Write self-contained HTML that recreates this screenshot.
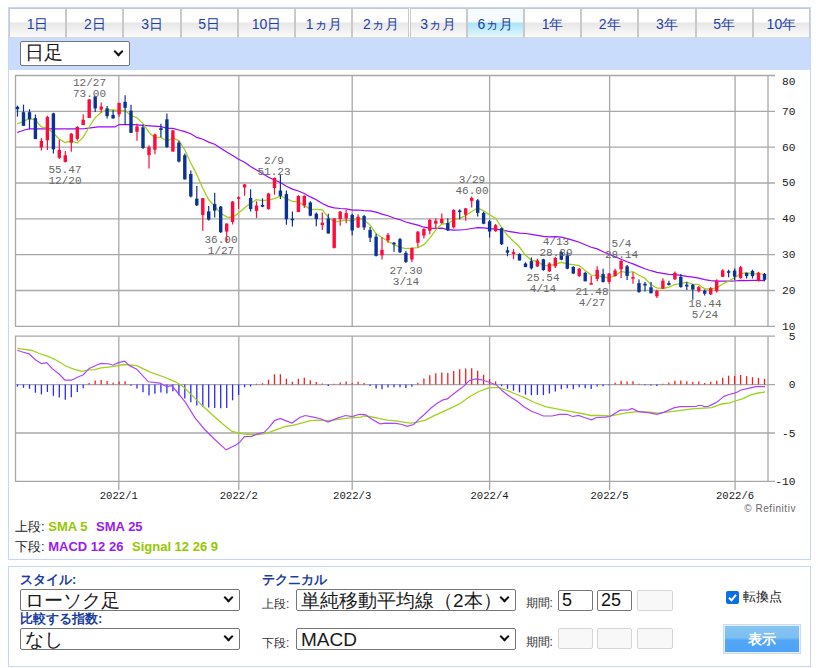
<!DOCTYPE html>
<html><head><meta charset="utf-8">
<style>
*{box-sizing:border-box;margin:0;padding:0}
html,body{width:818px;height:668px;background:#fff;overflow:hidden;font-family:"Liberation Sans",sans-serif}
.abs{position:absolute}
#p1{position:absolute;left:8px;top:7px;width:803px;height:553px;border:1px solid #c6d7f5}
#p2{position:absolute;left:8px;top:566px;width:803px;height:101px;border:1px solid #c6d7f5}
.tab{position:absolute;top:8px;height:30px;border:1px solid #c9c9c9;border-bottom-color:#dadada;
 background:linear-gradient(#ffffff 0px,#ffffff 13px,#e7e7e7 14px,#fbfbfb 28px);
 color:#1e3ea6;font-size:14px;line-height:30px;text-align:center}
.tab.act{background:linear-gradient(#f5fcff 0px,#f5fcff 13px,#a9e4f8 14px,#e4f7fd 28px)}
#bar{position:absolute;left:9px;top:38px;width:801px;height:32px;background:#c9dcfb}
.sel{position:absolute;background:#fff;border:1px solid #767676;border-radius:2px;color:#1a1a1a;font-size:19px;line-height:22px;padding-left:4px;white-space:nowrap;overflow:hidden}
.chev{position:absolute;width:7px;height:7px;border-right:2.2px solid #111;border-bottom:2.2px solid #111;transform:rotate(45deg)}
.lb{font-family:"Liberation Mono",monospace;font-size:11px;fill:#666;text-anchor:middle}
.ax{font-family:"Liberation Mono",monospace;font-size:11.2px;fill:#1a1a1a;text-anchor:end}
.dt{font-family:"Liberation Mono",monospace;font-size:10.6px;fill:#1a1a1a;text-anchor:middle}
.rf{font-family:"Liberation Sans",sans-serif;font-size:10px;fill:#6a6a6a;text-anchor:end;letter-spacing:0.55px}
.leg{position:absolute;left:15px;font-size:13px;color:#222;white-space:nowrap}
.g{color:#94c800;font-weight:bold} .pu{color:#9a1af0;font-weight:bold}
.hd{position:absolute;color:#1a3ea0;font-weight:bold;font-size:13px;white-space:nowrap}
.sm{position:absolute;font-size:12px;color:#333;white-space:nowrap;margin-top:1px}
.inp{position:absolute;width:35px;height:21px;border:1px solid #767676;border-radius:2px;background:#fff;font-size:18px;line-height:19px;padding-left:3px;color:#111}
.inp.dis{border-color:#d6d6d6;background:#f8f8f8}
</style></head><body>
<div id="p1"></div>
<div class="tab" style="left:9.00px;width:57.21px">1日</div>
<div class="tab" style="left:66.21px;width:57.21px">2日</div>
<div class="tab" style="left:123.43px;width:57.21px">3日</div>
<div class="tab" style="left:180.64px;width:57.21px">5日</div>
<div class="tab" style="left:237.86px;width:57.21px">10日</div>
<div class="tab" style="left:295.07px;width:57.21px">1ヵ月</div>
<div class="tab" style="left:352.29px;width:57.21px">2ヵ月</div>
<div class="tab" style="left:409.50px;width:57.21px">3ヵ月</div>
<div class="tab act" style="left:466.71px;width:57.21px">6ヵ月</div>
<div class="tab" style="left:523.93px;width:57.21px">1年</div>
<div class="tab" style="left:581.14px;width:57.21px">2年</div>
<div class="tab" style="left:638.36px;width:57.21px">3年</div>
<div class="tab" style="left:695.57px;width:57.21px">5年</div>
<div class="tab" style="left:752.79px;width:57.21px">10年</div>
<div id="bar"></div>
<div class="sel" style="left:20px;top:41px;width:110px;height:25px">日足</div>
<div class="chev" style="left:115px;top:48px"></div>
<svg class="abs" style="left:0;top:0" width="818" height="668" viewBox="0 0 818 668">
<line x1="15" y1="75.5" x2="775" y2="75.5" stroke="#a8a8a8" stroke-width="1.3"/>
<line x1="15" y1="111.3" x2="775" y2="111.3" stroke="#a8a8a8" stroke-width="1.3"/>
<line x1="15" y1="147.2" x2="775" y2="147.2" stroke="#a8a8a8" stroke-width="1.3"/>
<line x1="15" y1="183.0" x2="775" y2="183.0" stroke="#a8a8a8" stroke-width="1.3"/>
<line x1="15" y1="218.9" x2="775" y2="218.9" stroke="#a8a8a8" stroke-width="1.3"/>
<line x1="15" y1="254.7" x2="775" y2="254.7" stroke="#a8a8a8" stroke-width="1.3"/>
<line x1="15" y1="290.5" x2="775" y2="290.5" stroke="#a8a8a8" stroke-width="1.3"/>
<line x1="15" y1="326.4" x2="775" y2="326.4" stroke="#a8a8a8" stroke-width="1.3"/>
<line x1="15" y1="336.2" x2="775" y2="336.2" stroke="#a8a8a8" stroke-width="1.3"/>
<line x1="15" y1="384.6" x2="775" y2="384.6" stroke="#a8a8a8" stroke-width="1.3"/>
<line x1="15" y1="433.0" x2="775" y2="433.0" stroke="#a8a8a8" stroke-width="1.3"/>
<line x1="15" y1="481.4" x2="775" y2="481.4" stroke="#a8a8a8" stroke-width="1.3"/>
<line x1="118.8" y1="75.5" x2="118.8" y2="326.3" stroke="#a8a8a8" stroke-width="1.3"/>
<line x1="118.8" y1="336.2" x2="118.8" y2="490" stroke="#a8a8a8" stroke-width="1.3"/>
<line x1="238.8" y1="75.5" x2="238.8" y2="326.3" stroke="#a8a8a8" stroke-width="1.3"/>
<line x1="238.8" y1="336.2" x2="238.8" y2="490" stroke="#a8a8a8" stroke-width="1.3"/>
<line x1="352.2" y1="75.5" x2="352.2" y2="326.3" stroke="#a8a8a8" stroke-width="1.3"/>
<line x1="352.2" y1="336.2" x2="352.2" y2="490" stroke="#a8a8a8" stroke-width="1.3"/>
<line x1="489.6" y1="75.5" x2="489.6" y2="326.3" stroke="#a8a8a8" stroke-width="1.3"/>
<line x1="489.6" y1="336.2" x2="489.6" y2="490" stroke="#a8a8a8" stroke-width="1.3"/>
<line x1="609.6" y1="75.5" x2="609.6" y2="326.3" stroke="#a8a8a8" stroke-width="1.3"/>
<line x1="609.6" y1="336.2" x2="609.6" y2="490" stroke="#a8a8a8" stroke-width="1.3"/>
<line x1="735.1" y1="75.5" x2="735.1" y2="326.3" stroke="#a8a8a8" stroke-width="1.3"/>
<line x1="735.1" y1="336.2" x2="735.1" y2="490" stroke="#a8a8a8" stroke-width="1.3"/>
<line x1="768.0" y1="75.5" x2="768.0" y2="326.3" stroke="#a8a8a8" stroke-width="1.3"/>
<line x1="768.0" y1="336.2" x2="768.0" y2="481.4" stroke="#a8a8a8" stroke-width="1.3"/>
<line x1="15.5" y1="75.5" x2="15.5" y2="326.3" stroke="#a8a8a8" stroke-width="1.3"/>
<line x1="15.5" y1="336.2" x2="15.5" y2="481.4" stroke="#a8a8a8" stroke-width="1.3"/>
<line x1="17.5" y1="384.5" x2="17.5" y2="386.5" stroke="#2a2aff" stroke-width="1.3"/>
<line x1="23.5" y1="384.5" x2="23.5" y2="387.8" stroke="#2a2aff" stroke-width="1.3"/>
<line x1="29.5" y1="384.5" x2="29.5" y2="388.8" stroke="#2a2aff" stroke-width="1.3"/>
<line x1="35.4" y1="384.5" x2="35.4" y2="392.7" stroke="#2a2aff" stroke-width="1.3"/>
<line x1="41.4" y1="384.5" x2="41.4" y2="394.4" stroke="#2a2aff" stroke-width="1.3"/>
<line x1="47.4" y1="384.5" x2="47.4" y2="392.0" stroke="#2a2aff" stroke-width="1.3"/>
<line x1="53.4" y1="384.5" x2="53.4" y2="395.8" stroke="#2a2aff" stroke-width="1.3"/>
<line x1="59.3" y1="384.5" x2="59.3" y2="397.4" stroke="#2a2aff" stroke-width="1.3"/>
<line x1="65.3" y1="384.5" x2="65.3" y2="399.7" stroke="#2a2aff" stroke-width="1.3"/>
<line x1="71.3" y1="384.5" x2="71.3" y2="397.2" stroke="#2a2aff" stroke-width="1.3"/>
<line x1="77.3" y1="384.5" x2="77.3" y2="392.1" stroke="#2a2aff" stroke-width="1.3"/>
<line x1="83.2" y1="384.5" x2="83.2" y2="388.3" stroke="#2a2aff" stroke-width="1.3"/>
<line x1="89.2" y1="384.5" x2="89.2" y2="382.9" stroke="#ff1a1a" stroke-width="1.3"/>
<line x1="95.2" y1="384.5" x2="95.2" y2="380.5" stroke="#ff1a1a" stroke-width="1.3"/>
<line x1="101.2" y1="384.5" x2="101.2" y2="379.9" stroke="#ff1a1a" stroke-width="1.3"/>
<line x1="107.1" y1="384.5" x2="107.1" y2="380.9" stroke="#ff1a1a" stroke-width="1.3"/>
<line x1="113.1" y1="384.5" x2="113.1" y2="382.8" stroke="#ff1a1a" stroke-width="1.3"/>
<line x1="119.1" y1="384.5" x2="119.1" y2="381.5" stroke="#ff1a1a" stroke-width="1.3"/>
<line x1="125.1" y1="384.5" x2="125.1" y2="381.3" stroke="#ff1a1a" stroke-width="1.3"/>
<line x1="131.0" y1="384.5" x2="131.0" y2="385.8" stroke="#2a2aff" stroke-width="1.3"/>
<line x1="137.0" y1="384.5" x2="137.0" y2="388.4" stroke="#2a2aff" stroke-width="1.3"/>
<line x1="143.0" y1="384.5" x2="143.0" y2="392.2" stroke="#2a2aff" stroke-width="1.3"/>
<line x1="149.0" y1="384.5" x2="149.0" y2="395.4" stroke="#2a2aff" stroke-width="1.3"/>
<line x1="154.9" y1="384.5" x2="154.9" y2="393.8" stroke="#2a2aff" stroke-width="1.3"/>
<line x1="160.9" y1="384.5" x2="160.9" y2="392.6" stroke="#2a2aff" stroke-width="1.3"/>
<line x1="166.9" y1="384.5" x2="166.9" y2="393.4" stroke="#2a2aff" stroke-width="1.3"/>
<line x1="172.9" y1="384.5" x2="172.9" y2="391.2" stroke="#2a2aff" stroke-width="1.3"/>
<line x1="178.9" y1="384.5" x2="178.9" y2="395.3" stroke="#2a2aff" stroke-width="1.3"/>
<line x1="184.8" y1="384.5" x2="184.8" y2="398.6" stroke="#2a2aff" stroke-width="1.3"/>
<line x1="190.8" y1="384.5" x2="190.8" y2="402.3" stroke="#2a2aff" stroke-width="1.3"/>
<line x1="196.8" y1="384.5" x2="196.8" y2="405.4" stroke="#2a2aff" stroke-width="1.3"/>
<line x1="202.8" y1="384.5" x2="202.8" y2="406.7" stroke="#2a2aff" stroke-width="1.3"/>
<line x1="208.7" y1="384.5" x2="208.7" y2="407.6" stroke="#2a2aff" stroke-width="1.3"/>
<line x1="214.7" y1="384.5" x2="214.7" y2="408.1" stroke="#2a2aff" stroke-width="1.3"/>
<line x1="220.7" y1="384.5" x2="220.7" y2="408.3" stroke="#2a2aff" stroke-width="1.3"/>
<line x1="226.7" y1="384.5" x2="226.7" y2="408.1" stroke="#2a2aff" stroke-width="1.3"/>
<line x1="232.6" y1="384.5" x2="232.6" y2="400.3" stroke="#2a2aff" stroke-width="1.3"/>
<line x1="238.6" y1="384.5" x2="238.6" y2="395.0" stroke="#2a2aff" stroke-width="1.3"/>
<line x1="244.6" y1="384.5" x2="244.6" y2="387.3" stroke="#2a2aff" stroke-width="1.3"/>
<line x1="250.6" y1="384.5" x2="250.6" y2="386.5" stroke="#2a2aff" stroke-width="1.3"/>
<line x1="256.5" y1="384.5" x2="256.5" y2="383.7" stroke="#ff1a1a" stroke-width="1.3"/>
<line x1="262.5" y1="384.5" x2="262.5" y2="383.2" stroke="#ff1a1a" stroke-width="1.3"/>
<line x1="268.5" y1="384.5" x2="268.5" y2="379.7" stroke="#ff1a1a" stroke-width="1.3"/>
<line x1="274.5" y1="384.5" x2="274.5" y2="374.3" stroke="#ff1a1a" stroke-width="1.3"/>
<line x1="280.4" y1="384.5" x2="280.4" y2="374.2" stroke="#ff1a1a" stroke-width="1.3"/>
<line x1="286.4" y1="384.5" x2="286.4" y2="378.8" stroke="#ff1a1a" stroke-width="1.3"/>
<line x1="292.4" y1="384.5" x2="292.4" y2="381.8" stroke="#ff1a1a" stroke-width="1.3"/>
<line x1="298.4" y1="384.5" x2="298.4" y2="378.8" stroke="#ff1a1a" stroke-width="1.3"/>
<line x1="304.3" y1="384.5" x2="304.3" y2="377.7" stroke="#ff1a1a" stroke-width="1.3"/>
<line x1="310.3" y1="384.5" x2="310.3" y2="380.2" stroke="#ff1a1a" stroke-width="1.3"/>
<line x1="316.3" y1="384.5" x2="316.3" y2="381.9" stroke="#ff1a1a" stroke-width="1.3"/>
<line x1="322.3" y1="384.5" x2="322.3" y2="383.5" stroke="#ff1a1a" stroke-width="1.3"/>
<line x1="328.3" y1="384.5" x2="328.3" y2="386.0" stroke="#2a2aff" stroke-width="1.3"/>
<line x1="334.2" y1="384.5" x2="334.2" y2="383.7" stroke="#ff1a1a" stroke-width="1.3"/>
<line x1="340.2" y1="384.5" x2="340.2" y2="382.5" stroke="#ff1a1a" stroke-width="1.3"/>
<line x1="346.2" y1="384.5" x2="346.2" y2="381.6" stroke="#ff1a1a" stroke-width="1.3"/>
<line x1="352.2" y1="384.5" x2="352.2" y2="383.1" stroke="#ff1a1a" stroke-width="1.3"/>
<line x1="358.1" y1="384.5" x2="358.1" y2="381.7" stroke="#ff1a1a" stroke-width="1.3"/>
<line x1="364.1" y1="384.5" x2="364.1" y2="382.9" stroke="#ff1a1a" stroke-width="1.3"/>
<line x1="370.1" y1="384.5" x2="370.1" y2="386.0" stroke="#2a2aff" stroke-width="1.3"/>
<line x1="376.1" y1="384.5" x2="376.1" y2="388.4" stroke="#2a2aff" stroke-width="1.3"/>
<line x1="382.0" y1="384.5" x2="382.0" y2="389.2" stroke="#2a2aff" stroke-width="1.3"/>
<line x1="388.0" y1="384.5" x2="388.0" y2="387.6" stroke="#2a2aff" stroke-width="1.3"/>
<line x1="394.0" y1="384.5" x2="394.0" y2="387.3" stroke="#2a2aff" stroke-width="1.3"/>
<line x1="400.0" y1="384.5" x2="400.0" y2="387.2" stroke="#2a2aff" stroke-width="1.3"/>
<line x1="405.9" y1="384.5" x2="405.9" y2="388.1" stroke="#2a2aff" stroke-width="1.3"/>
<line x1="411.9" y1="384.5" x2="411.9" y2="386.7" stroke="#2a2aff" stroke-width="1.3"/>
<line x1="417.9" y1="384.5" x2="417.9" y2="382.7" stroke="#ff1a1a" stroke-width="1.3"/>
<line x1="423.9" y1="384.5" x2="423.9" y2="378.6" stroke="#ff1a1a" stroke-width="1.3"/>
<line x1="429.8" y1="384.5" x2="429.8" y2="375.3" stroke="#ff1a1a" stroke-width="1.3"/>
<line x1="435.8" y1="384.5" x2="435.8" y2="373.3" stroke="#ff1a1a" stroke-width="1.3"/>
<line x1="441.8" y1="384.5" x2="441.8" y2="372.4" stroke="#ff1a1a" stroke-width="1.3"/>
<line x1="447.8" y1="384.5" x2="447.8" y2="373.1" stroke="#ff1a1a" stroke-width="1.3"/>
<line x1="453.7" y1="384.5" x2="453.7" y2="370.9" stroke="#ff1a1a" stroke-width="1.3"/>
<line x1="459.7" y1="384.5" x2="459.7" y2="369.3" stroke="#ff1a1a" stroke-width="1.3"/>
<line x1="465.7" y1="384.5" x2="465.7" y2="368.5" stroke="#ff1a1a" stroke-width="1.3"/>
<line x1="471.7" y1="384.5" x2="471.7" y2="368.2" stroke="#ff1a1a" stroke-width="1.3"/>
<line x1="477.7" y1="384.5" x2="477.7" y2="370.8" stroke="#ff1a1a" stroke-width="1.3"/>
<line x1="483.6" y1="384.5" x2="483.6" y2="374.8" stroke="#ff1a1a" stroke-width="1.3"/>
<line x1="489.6" y1="384.5" x2="489.6" y2="379.1" stroke="#ff1a1a" stroke-width="1.3"/>
<line x1="495.6" y1="384.5" x2="495.6" y2="381.4" stroke="#ff1a1a" stroke-width="1.3"/>
<line x1="501.6" y1="384.5" x2="501.6" y2="386.2" stroke="#2a2aff" stroke-width="1.3"/>
<line x1="507.5" y1="384.5" x2="507.5" y2="388.9" stroke="#2a2aff" stroke-width="1.3"/>
<line x1="513.5" y1="384.5" x2="513.5" y2="390.6" stroke="#2a2aff" stroke-width="1.3"/>
<line x1="519.5" y1="384.5" x2="519.5" y2="392.4" stroke="#2a2aff" stroke-width="1.3"/>
<line x1="525.5" y1="384.5" x2="525.5" y2="394.6" stroke="#2a2aff" stroke-width="1.3"/>
<line x1="531.4" y1="384.5" x2="531.4" y2="395.2" stroke="#2a2aff" stroke-width="1.3"/>
<line x1="537.4" y1="384.5" x2="537.4" y2="394.9" stroke="#2a2aff" stroke-width="1.3"/>
<line x1="543.4" y1="384.5" x2="543.4" y2="395.2" stroke="#2a2aff" stroke-width="1.3"/>
<line x1="549.4" y1="384.5" x2="549.4" y2="393.5" stroke="#2a2aff" stroke-width="1.3"/>
<line x1="555.3" y1="384.5" x2="555.3" y2="391.5" stroke="#2a2aff" stroke-width="1.3"/>
<line x1="561.3" y1="384.5" x2="561.3" y2="389.3" stroke="#2a2aff" stroke-width="1.3"/>
<line x1="567.3" y1="384.5" x2="567.3" y2="388.3" stroke="#2a2aff" stroke-width="1.3"/>
<line x1="573.3" y1="384.5" x2="573.3" y2="389.2" stroke="#2a2aff" stroke-width="1.3"/>
<line x1="579.2" y1="384.5" x2="579.2" y2="387.2" stroke="#2a2aff" stroke-width="1.3"/>
<line x1="585.2" y1="384.5" x2="585.2" y2="388.2" stroke="#2a2aff" stroke-width="1.3"/>
<line x1="591.2" y1="384.5" x2="591.2" y2="389.0" stroke="#2a2aff" stroke-width="1.3"/>
<line x1="597.2" y1="384.5" x2="597.2" y2="386.6" stroke="#2a2aff" stroke-width="1.3"/>
<line x1="603.1" y1="384.5" x2="603.1" y2="386.2" stroke="#2a2aff" stroke-width="1.3"/>
<line x1="609.1" y1="384.5" x2="609.1" y2="385.2" stroke="#2a2aff" stroke-width="1.3"/>
<line x1="615.1" y1="384.5" x2="615.1" y2="382.7" stroke="#ff1a1a" stroke-width="1.3"/>
<line x1="621.1" y1="384.5" x2="621.1" y2="380.7" stroke="#ff1a1a" stroke-width="1.3"/>
<line x1="627.1" y1="384.5" x2="627.1" y2="381.6" stroke="#ff1a1a" stroke-width="1.3"/>
<line x1="633.0" y1="384.5" x2="633.0" y2="381.2" stroke="#ff1a1a" stroke-width="1.3"/>
<line x1="639.0" y1="384.5" x2="639.0" y2="383.7" stroke="#ff1a1a" stroke-width="1.3"/>
<line x1="645.0" y1="384.5" x2="645.0" y2="385.3" stroke="#2a2aff" stroke-width="1.3"/>
<line x1="651.0" y1="384.5" x2="651.0" y2="385.4" stroke="#2a2aff" stroke-width="1.3"/>
<line x1="656.9" y1="384.5" x2="656.9" y2="385.9" stroke="#2a2aff" stroke-width="1.3"/>
<line x1="662.9" y1="384.5" x2="662.9" y2="383.7" stroke="#ff1a1a" stroke-width="1.3"/>
<line x1="668.9" y1="384.5" x2="668.9" y2="382.6" stroke="#ff1a1a" stroke-width="1.3"/>
<line x1="674.9" y1="384.5" x2="674.9" y2="380.8" stroke="#ff1a1a" stroke-width="1.3"/>
<line x1="680.8" y1="384.5" x2="680.8" y2="380.6" stroke="#ff1a1a" stroke-width="1.3"/>
<line x1="686.8" y1="384.5" x2="686.8" y2="381.3" stroke="#ff1a1a" stroke-width="1.3"/>
<line x1="692.8" y1="384.5" x2="692.8" y2="382.0" stroke="#ff1a1a" stroke-width="1.3"/>
<line x1="698.8" y1="384.5" x2="698.8" y2="381.4" stroke="#ff1a1a" stroke-width="1.3"/>
<line x1="704.7" y1="384.5" x2="704.7" y2="383.0" stroke="#ff1a1a" stroke-width="1.3"/>
<line x1="710.7" y1="384.5" x2="710.7" y2="381.8" stroke="#ff1a1a" stroke-width="1.3"/>
<line x1="716.7" y1="384.5" x2="716.7" y2="380.7" stroke="#ff1a1a" stroke-width="1.3"/>
<line x1="722.7" y1="384.5" x2="722.7" y2="377.8" stroke="#ff1a1a" stroke-width="1.3"/>
<line x1="728.6" y1="384.5" x2="728.6" y2="375.7" stroke="#ff1a1a" stroke-width="1.3"/>
<line x1="734.6" y1="384.5" x2="734.6" y2="376.0" stroke="#ff1a1a" stroke-width="1.3"/>
<line x1="740.6" y1="384.5" x2="740.6" y2="374.9" stroke="#ff1a1a" stroke-width="1.3"/>
<line x1="746.6" y1="384.5" x2="746.6" y2="376.1" stroke="#ff1a1a" stroke-width="1.3"/>
<line x1="752.5" y1="384.5" x2="752.5" y2="377.2" stroke="#ff1a1a" stroke-width="1.3"/>
<line x1="758.5" y1="384.5" x2="758.5" y2="377.9" stroke="#ff1a1a" stroke-width="1.3"/>
<line x1="764.5" y1="384.5" x2="764.5" y2="378.9" stroke="#ff1a1a" stroke-width="1.3"/>
<polyline points="17.1,132.5 26.0,129.5 30.0,128.9 74.0,128.9 85.0,128.7 98.0,126.9 115.0,126.9 119.0,124.5 134.0,124.6 150.0,125.8 160.9,126.6 166.9,128.1 172.9,128.3 178.9,130.0 184.8,131.6 190.8,133.8 196.8,137.4 202.8,139.3 208.7,142.1 214.7,144.3 220.7,148.2 226.7,152.1 232.6,155.4 238.6,159.3 244.6,162.3 250.6,166.4 256.5,170.0 262.5,173.5 268.5,177.2 274.5,180.0 280.4,182.5 286.4,186.2 292.4,189.1 298.4,191.0 304.3,193.5 310.3,196.9 316.3,199.8 322.3,203.5 328.3,206.4 334.2,207.9 340.2,208.5 346.2,208.8 352.2,210.1 358.1,210.0 364.1,210.7 370.1,210.9 376.1,212.2 382.0,214.1 388.0,215.7 394.0,218.0 400.0,219.8 405.9,222.0 411.9,223.7 417.9,225.2 423.9,227.2 429.8,228.2 435.8,228.3 441.8,228.2 447.8,229.6 453.7,230.2 459.7,230.0 465.7,229.5 471.7,228.5 477.7,227.7 483.6,227.9 489.6,228.7 495.6,229.2 501.6,229.8 507.5,231.2 513.5,232.2 519.5,233.1 525.5,233.5 531.4,234.3 537.4,235.3 543.4,236.4 549.4,236.8 555.3,236.6 561.3,237.1 567.3,238.6 573.3,240.4 579.2,242.3 585.2,244.7 591.2,247.3 597.2,248.9 603.1,251.8 609.1,254.3 615.1,256.8 621.1,259.3 627.1,261.8 633.0,263.9 639.0,266.4 645.0,268.8 651.0,270.7 656.9,272.3 662.9,273.4 668.9,274.4 674.9,274.6 680.8,275.4 686.8,276.4 692.8,277.2 698.8,278.1 704.7,279.6 710.7,280.7 716.7,281.2 722.7,281.0 728.6,281.2 734.6,281.0 740.6,280.4 746.6,280.6 752.5,280.4 758.5,280.4 764.5,280.7" fill="none" stroke="#9a08ff" stroke-width="1.2"/>
<polyline points="17.1,124.0 23.1,121.7 29.1,118.7 35.0,119.7 41.4,126.9 47.4,128.4 53.4,133.1 59.3,139.2 65.3,142.5 71.3,141.0 77.3,143.0 83.2,137.1 89.2,127.0 95.2,117.6 101.2,112.2 107.1,110.0 113.1,109.8 119.1,110.5 125.1,110.4 131.0,115.7 137.0,117.7 143.0,123.6 149.0,132.4 154.9,137.8 160.9,137.2 166.9,141.3 172.9,137.8 178.9,140.7 184.8,149.7 190.8,163.0 196.8,174.6 202.8,188.2 208.7,199.8 214.7,206.1 220.7,213.2 226.7,216.8 232.6,217.5 238.6,213.0 244.6,207.8 250.6,203.2 256.5,199.6 262.5,200.6 268.5,199.8 274.5,198.6 280.4,195.9 286.4,198.7 292.4,201.3 298.4,201.8 304.3,205.4 310.3,209.3 316.3,209.3 322.3,209.9 328.3,217.4 334.2,221.9 340.2,221.1 346.2,219.9 352.2,221.4 358.1,218.1 364.1,219.9 370.1,225.1 376.1,233.7 382.0,237.5 388.0,241.2 394.0,244.5 400.0,247.4 405.9,248.6 411.9,248.2 417.9,247.6 423.9,244.6 429.8,238.1 435.8,229.9 441.8,224.0 447.8,223.7 453.7,219.9 459.7,218.2 465.7,215.7 471.7,211.5 477.7,208.0 483.6,210.8 489.6,214.9 495.6,218.2 501.6,227.5 507.5,235.5 513.5,241.2 519.5,247.0 525.5,255.3 531.4,260.1 537.4,261.7 543.4,265.3 549.4,265.9 555.3,264.1 561.3,262.3 567.3,264.0 573.3,264.7 579.2,265.7 585.2,270.4 591.2,275.1 597.2,275.3 603.1,277.0 609.1,277.9 615.1,275.8 621.1,271.4 627.1,272.6 633.0,271.6 639.0,275.3 645.0,278.3 651.0,284.8 656.9,287.8 662.9,288.5 668.9,287.1 674.9,284.5 680.8,283.3 686.8,282.4 692.8,284.2 698.8,284.6 704.7,288.8 710.7,289.0 716.7,287.8 722.7,284.0 728.6,281.1 734.6,277.7 740.6,273.5 746.6,272.6 752.5,273.8 758.5,273.8 764.5,274.4" fill="none" stroke="#9fd21a" stroke-width="1.3"/>
<polyline points="17.3,348.3 24.7,349.4 32.0,350.5 39.3,353.5 48.1,356.4 57.0,360.5 65.7,366.0 74.5,369.3 81.9,371.4 89.2,369.9 95.0,369.6 101.0,367.8 112.7,366.7 123.0,364.5 136.7,365.7 150.3,372.1 163.9,377.0 175.6,381.8 183.3,386.7 193.1,396.4 202.8,406.1 212.5,414.9 222.2,423.6 232.0,431.4 241.7,433.7 248.8,434.5 257.6,434.5 266.4,433.4 275.2,430.1 285.5,426.5 292.8,425.4 301.6,423.1 310.4,420.6 319.2,420.2 328.0,420.6 336.8,419.6 345.6,418.4 360.9,417.2 363.8,416.0 369.7,416.5 378.5,418.4 387.3,420.1 396.1,420.9 404.9,422.3 410.7,423.1 416.6,422.3 425.4,420.1 434.2,415.7 443.0,411.6 451.8,407.7 460.6,403.3 469.4,396.7 478.8,391.5 489.1,387.6 499.3,387.6 508.1,390.8 516.9,394.5 525.7,398.1 534.5,402.5 546.3,406.9 558.0,409.1 569.7,411.3 581.5,413.5 590.9,415.5 599.7,415.5 609.9,416.0 617.3,414.6 626.1,412.8 637.8,411.6 649.5,412.1 658.3,413.1 667.1,412.1 678.9,410.6 692.2,408.9 711.8,407.7 721.6,404.0 730.1,402.8 735.0,401.0 742.3,398.9 750.9,394.8 758.2,393.0 765.0,392.0" fill="none" stroke="#9fd21a" stroke-width="1.3"/>
<polyline points="17.3,350.2 23.2,352.3 29.0,353.8 35.7,360.0 41.5,363.7 46.7,362.6 52.5,368.9 59.1,374.0 65.0,380.2 71.6,380.2 77.5,377.2 83.3,374.7 89.2,368.4 98.0,364.5 101.0,363.4 109.7,364.0 112.7,365.2 118.6,362.6 124.4,361.1 130.0,365.9 136.7,369.2 148.3,381.8 160.0,383.2 166.8,386.7 171.7,385.7 177.5,392.5 185.3,402.2 195.0,417.8 204.7,429.5 214.5,439.2 226.1,449.9 235.9,445.0 240.0,441.9 244.4,436.7 251.7,436.3 257.6,433.8 264.2,432.3 269.3,427.2 274.5,420.6 280.3,418.4 285.5,420.6 292.1,423.1 300.1,417.2 305.3,415.5 313.3,417.2 320.7,418.7 328.0,422.1 336.8,418.4 345.6,415.5 352.2,416.6 359.4,414.3 365.3,414.6 371.1,418.7 380.0,423.8 385.8,423.1 396.1,423.4 401.9,424.5 407.1,426.3 413.7,424.5 419.5,418.7 425.4,413.5 431.3,407.7 437.1,403.3 443.0,399.9 447.4,398.9 451.8,395.2 457.7,390.8 463.6,386.4 469.4,380.5 475.9,378.8 481.7,379.8 489.1,382.3 496.4,384.9 502.3,390.8 509.6,396.4 516.9,401.1 524.3,406.9 531.6,411.3 537.5,413.5 543.3,416.0 552.1,416.0 559.5,414.3 566.8,414.3 572.7,416.5 578.6,415.4 584.4,417.5 591.6,419.9 596.7,417.5 605.5,417.2 609.9,416.5 620.2,410.2 629.0,409.9 632.0,408.4 637.8,411.3 649.5,412.8 656.9,414.3 664.2,412.1 674.5,407.7 680.4,406.6 695.9,406.5 698.3,405.5 702.0,405.5 704.4,406.7 708.1,406.5 711.8,404.6 716.7,402.2 720.3,399.4 724.0,396.4 728.9,394.5 733.8,393.3 737.5,392.0 741.1,390.0 748.5,388.4 755.8,386.7 765.0,386.7" fill="none" stroke="#ac45ff" stroke-width="1.2"/>
<line x1="17.5" y1="105.6" x2="17.5" y2="116.6" stroke="#0a3296" stroke-width="1.2"/>
<rect x="15.8" y="106.8" width="3.4" height="2.4" fill="#0a3296"/>
<line x1="23.5" y1="104.6" x2="23.5" y2="126.0" stroke="#0a3296" stroke-width="1.2"/>
<rect x="21.8" y="112.2" width="3.4" height="13.7" fill="#0a3296"/>
<line x1="29.5" y1="109.2" x2="29.5" y2="128.9" stroke="#0a3296" stroke-width="1.2"/>
<rect x="27.8" y="112.2" width="3.4" height="7.1" fill="#0a3296"/>
<line x1="35.4" y1="114.6" x2="35.4" y2="139.1" stroke="#0a3296" stroke-width="1.2"/>
<rect x="33.7" y="118.1" width="3.4" height="21.0" fill="#0a3296"/>
<line x1="41.4" y1="137.9" x2="41.4" y2="150.5" stroke="#ff0a3a" stroke-width="1.2"/>
<rect x="39.7" y="140.9" width="3.4" height="6.6" fill="#ff0a3a"/>
<line x1="47.4" y1="115.7" x2="47.4" y2="149.9" stroke="#ff0a3a" stroke-width="1.2"/>
<rect x="45.7" y="117.0" width="3.4" height="23.3" fill="#ff0a3a"/>
<line x1="53.4" y1="112.8" x2="53.4" y2="153.5" stroke="#0a3296" stroke-width="1.2"/>
<rect x="51.7" y="113.4" width="3.4" height="35.9" fill="#0a3296"/>
<line x1="59.3" y1="139.7" x2="59.3" y2="158.9" stroke="#ff0a3a" stroke-width="1.2"/>
<rect x="57.6" y="149.9" width="3.4" height="7.8" fill="#ff0a3a"/>
<line x1="65.3" y1="151.0" x2="65.3" y2="162.5" stroke="#ff0a3a" stroke-width="1.2"/>
<rect x="63.6" y="155.3" width="3.4" height="6.6" fill="#ff0a3a"/>
<line x1="71.3" y1="133.1" x2="71.3" y2="151.7" stroke="#ff0a3a" stroke-width="1.2"/>
<rect x="69.6" y="133.7" width="3.4" height="9.0" fill="#ff0a3a"/>
<line x1="77.3" y1="126.3" x2="77.3" y2="140.7" stroke="#ff0a3a" stroke-width="1.2"/>
<rect x="75.6" y="126.9" width="3.4" height="12.0" fill="#ff0a3a"/>
<line x1="83.2" y1="114.3" x2="83.2" y2="125.1" stroke="#ff0a3a" stroke-width="1.2"/>
<rect x="81.5" y="119.7" width="3.4" height="5.4" fill="#ff0a3a"/>
<line x1="89.2" y1="99.1" x2="89.2" y2="117.9" stroke="#ff0a3a" stroke-width="1.2"/>
<rect x="87.5" y="99.4" width="3.4" height="18.5" fill="#ff0a3a"/>
<line x1="95.2" y1="95.8" x2="95.2" y2="112.0" stroke="#0a3296" stroke-width="1.2"/>
<rect x="93.5" y="96.4" width="3.4" height="12.0" fill="#0a3296"/>
<line x1="101.2" y1="102.4" x2="101.2" y2="112.5" stroke="#ff0a3a" stroke-width="1.2"/>
<rect x="99.5" y="106.6" width="3.4" height="3.0" fill="#ff0a3a"/>
<line x1="107.1" y1="106.0" x2="107.1" y2="118.5" stroke="#0a3296" stroke-width="1.2"/>
<rect x="105.4" y="108.4" width="3.4" height="7.7" fill="#0a3296"/>
<line x1="113.1" y1="110.1" x2="113.1" y2="118.5" stroke="#0a3296" stroke-width="1.2"/>
<rect x="111.4" y="114.9" width="3.4" height="3.6" fill="#0a3296"/>
<line x1="119.1" y1="102.4" x2="119.1" y2="116.7" stroke="#ff0a3a" stroke-width="1.2"/>
<rect x="117.4" y="103.0" width="3.4" height="11.3" fill="#ff0a3a"/>
<line x1="125.1" y1="95.2" x2="125.1" y2="125.1" stroke="#0a3296" stroke-width="1.2"/>
<rect x="123.4" y="101.8" width="3.4" height="6.0" fill="#0a3296"/>
<line x1="131.0" y1="104.8" x2="131.0" y2="132.9" stroke="#0a3296" stroke-width="1.2"/>
<rect x="129.3" y="110.7" width="3.4" height="22.2" fill="#0a3296"/>
<line x1="137.0" y1="123.7" x2="137.0" y2="140.8" stroke="#ff0a3a" stroke-width="1.2"/>
<rect x="135.3" y="126.4" width="3.4" height="5.4" fill="#ff0a3a"/>
<line x1="143.0" y1="124.6" x2="143.0" y2="148.9" stroke="#0a3296" stroke-width="1.2"/>
<rect x="141.3" y="127.3" width="3.4" height="20.7" fill="#0a3296"/>
<line x1="149.0" y1="145.3" x2="149.0" y2="168.6" stroke="#ff0a3a" stroke-width="1.2"/>
<rect x="147.3" y="147.1" width="3.4" height="8.1" fill="#ff0a3a"/>
<line x1="154.9" y1="133.6" x2="154.9" y2="154.3" stroke="#ff0a3a" stroke-width="1.2"/>
<rect x="153.2" y="134.5" width="3.4" height="15.3" fill="#ff0a3a"/>
<line x1="160.9" y1="123.7" x2="160.9" y2="137.2" stroke="#0a3296" stroke-width="1.2"/>
<rect x="159.2" y="128.2" width="3.4" height="1.8" fill="#0a3296"/>
<line x1="166.9" y1="113.5" x2="166.9" y2="148.0" stroke="#0a3296" stroke-width="1.2"/>
<rect x="165.2" y="119.3" width="3.4" height="27.8" fill="#0a3296"/>
<line x1="172.9" y1="130.0" x2="172.9" y2="151.6" stroke="#ff0a3a" stroke-width="1.2"/>
<rect x="171.2" y="130.4" width="3.4" height="21.2" fill="#ff0a3a"/>
<line x1="178.9" y1="140.8" x2="178.9" y2="162.4" stroke="#0a3296" stroke-width="1.2"/>
<rect x="177.2" y="142.6" width="3.4" height="18.9" fill="#0a3296"/>
<line x1="184.8" y1="153.4" x2="184.8" y2="179.4" stroke="#0a3296" stroke-width="1.2"/>
<rect x="183.1" y="155.2" width="3.4" height="24.2" fill="#0a3296"/>
<line x1="190.8" y1="170.4" x2="190.8" y2="197.4" stroke="#0a3296" stroke-width="1.2"/>
<rect x="189.1" y="174.0" width="3.4" height="22.5" fill="#0a3296"/>
<line x1="196.8" y1="185.9" x2="196.8" y2="206.1" stroke="#0a3296" stroke-width="1.2"/>
<rect x="195.1" y="198.7" width="3.4" height="6.7" fill="#0a3296"/>
<line x1="202.8" y1="197.9" x2="202.8" y2="230.8" stroke="#ff0a3a" stroke-width="1.2"/>
<rect x="201.1" y="198.2" width="3.4" height="16.9" fill="#ff0a3a"/>
<line x1="208.7" y1="206.1" x2="208.7" y2="220.4" stroke="#0a3296" stroke-width="1.2"/>
<rect x="207.0" y="211.4" width="3.4" height="8.2" fill="#0a3296"/>
<line x1="214.7" y1="192.7" x2="214.7" y2="217.4" stroke="#0a3296" stroke-width="1.2"/>
<rect x="213.0" y="203.9" width="3.4" height="6.7" fill="#0a3296"/>
<line x1="220.7" y1="206.1" x2="220.7" y2="233.0" stroke="#0a3296" stroke-width="1.2"/>
<rect x="219.0" y="206.6" width="3.4" height="25.6" fill="#0a3296"/>
<line x1="226.7" y1="223.4" x2="226.7" y2="242.9" stroke="#ff0a3a" stroke-width="1.2"/>
<rect x="225.0" y="223.5" width="3.4" height="8.1" fill="#ff0a3a"/>
<line x1="232.6" y1="200.9" x2="232.6" y2="224.4" stroke="#ff0a3a" stroke-width="1.2"/>
<rect x="230.9" y="201.6" width="3.4" height="20.4" fill="#ff0a3a"/>
<line x1="238.6" y1="196.4" x2="238.6" y2="209.1" stroke="#ff0a3a" stroke-width="1.2"/>
<rect x="236.9" y="197.2" width="3.4" height="1.6" fill="#ff0a3a"/>
<line x1="244.6" y1="184.1" x2="244.6" y2="195.7" stroke="#ff0a3a" stroke-width="1.2"/>
<rect x="242.9" y="184.4" width="3.4" height="3.0" fill="#ff0a3a"/>
<line x1="250.6" y1="189.2" x2="250.6" y2="211.4" stroke="#0a3296" stroke-width="1.2"/>
<rect x="248.9" y="197.9" width="3.4" height="11.2" fill="#0a3296"/>
<line x1="256.5" y1="201.3" x2="256.5" y2="218.1" stroke="#ff0a3a" stroke-width="1.2"/>
<rect x="254.8" y="205.5" width="3.4" height="5.4" fill="#ff0a3a"/>
<line x1="262.5" y1="198.3" x2="262.5" y2="207.3" stroke="#0a3296" stroke-width="1.2"/>
<rect x="260.8" y="204.9" width="3.4" height="1.8" fill="#0a3296"/>
<line x1="268.5" y1="192.9" x2="268.5" y2="209.7" stroke="#ff0a3a" stroke-width="1.2"/>
<rect x="266.8" y="193.5" width="3.4" height="15.6" fill="#ff0a3a"/>
<line x1="274.5" y1="177.4" x2="274.5" y2="194.7" stroke="#ff0a3a" stroke-width="1.2"/>
<rect x="272.8" y="178.0" width="3.4" height="10.1" fill="#ff0a3a"/>
<line x1="280.4" y1="174.4" x2="280.4" y2="198.9" stroke="#0a3296" stroke-width="1.2"/>
<rect x="278.7" y="190.5" width="3.4" height="5.4" fill="#0a3296"/>
<line x1="286.4" y1="190.5" x2="286.4" y2="224.7" stroke="#0a3296" stroke-width="1.2"/>
<rect x="284.7" y="194.1" width="3.4" height="25.2" fill="#0a3296"/>
<line x1="292.4" y1="211.5" x2="292.4" y2="226.5" stroke="#0a3296" stroke-width="1.2"/>
<rect x="290.7" y="218.7" width="3.4" height="1.6" fill="#0a3296"/>
<line x1="298.4" y1="195.3" x2="298.4" y2="212.1" stroke="#ff0a3a" stroke-width="1.2"/>
<rect x="296.7" y="195.9" width="3.4" height="16.2" fill="#ff0a3a"/>
<line x1="304.3" y1="195.3" x2="304.3" y2="207.9" stroke="#ff0a3a" stroke-width="1.2"/>
<rect x="302.6" y="195.9" width="3.4" height="9.6" fill="#ff0a3a"/>
<line x1="310.3" y1="201.3" x2="310.3" y2="216.3" stroke="#0a3296" stroke-width="1.2"/>
<rect x="308.6" y="202.5" width="3.4" height="13.2" fill="#0a3296"/>
<line x1="316.3" y1="212.5" x2="316.3" y2="226.3" stroke="#0a3296" stroke-width="1.2"/>
<rect x="314.6" y="213.7" width="3.4" height="5.4" fill="#0a3296"/>
<line x1="322.3" y1="212.5" x2="322.3" y2="229.9" stroke="#ff0a3a" stroke-width="1.2"/>
<rect x="320.6" y="222.7" width="3.4" height="2.4" fill="#ff0a3a"/>
<line x1="328.3" y1="213.7" x2="328.3" y2="233.5" stroke="#0a3296" stroke-width="1.2"/>
<rect x="326.6" y="218.5" width="3.4" height="15.0" fill="#0a3296"/>
<line x1="334.2" y1="217.9" x2="334.2" y2="248.5" stroke="#ff0a3a" stroke-width="1.2"/>
<rect x="332.5" y="218.5" width="3.4" height="29.4" fill="#ff0a3a"/>
<line x1="340.2" y1="211.1" x2="340.2" y2="225.7" stroke="#ff0a3a" stroke-width="1.2"/>
<rect x="338.5" y="211.6" width="3.4" height="7.5" fill="#ff0a3a"/>
<line x1="346.2" y1="210.1" x2="346.2" y2="223.3" stroke="#ff0a3a" stroke-width="1.2"/>
<rect x="344.5" y="213.1" width="3.4" height="5.4" fill="#ff0a3a"/>
<line x1="352.2" y1="213.7" x2="352.2" y2="235.3" stroke="#0a3296" stroke-width="1.2"/>
<rect x="350.5" y="214.9" width="3.4" height="15.6" fill="#0a3296"/>
<line x1="358.1" y1="214.3" x2="358.1" y2="228.1" stroke="#ff0a3a" stroke-width="1.2"/>
<rect x="356.4" y="216.7" width="3.4" height="10.8" fill="#ff0a3a"/>
<line x1="364.1" y1="214.9" x2="364.1" y2="229.9" stroke="#0a3296" stroke-width="1.2"/>
<rect x="362.4" y="216.1" width="3.4" height="11.4" fill="#0a3296"/>
<line x1="370.1" y1="226.9" x2="370.1" y2="241.9" stroke="#0a3296" stroke-width="1.2"/>
<rect x="368.4" y="229.9" width="3.4" height="7.8" fill="#0a3296"/>
<line x1="376.1" y1="233.7" x2="376.1" y2="256.5" stroke="#0a3296" stroke-width="1.2"/>
<rect x="374.4" y="236.7" width="3.4" height="19.2" fill="#0a3296"/>
<line x1="382.0" y1="237.3" x2="382.0" y2="259.5" stroke="#ff0a3a" stroke-width="1.2"/>
<rect x="380.3" y="249.9" width="3.4" height="5.4" fill="#ff0a3a"/>
<line x1="388.0" y1="233.1" x2="388.0" y2="242.7" stroke="#ff0a3a" stroke-width="1.2"/>
<rect x="386.3" y="234.9" width="3.4" height="5.4" fill="#ff0a3a"/>
<line x1="394.0" y1="242.1" x2="394.0" y2="251.7" stroke="#0a3296" stroke-width="1.2"/>
<rect x="392.3" y="242.7" width="3.4" height="1.6" fill="#0a3296"/>
<line x1="400.0" y1="237.9" x2="400.0" y2="252.9" stroke="#0a3296" stroke-width="1.2"/>
<rect x="398.3" y="239.1" width="3.4" height="13.2" fill="#0a3296"/>
<line x1="405.9" y1="251.1" x2="405.9" y2="263.1" stroke="#0a3296" stroke-width="1.2"/>
<rect x="404.2" y="252.9" width="3.4" height="9.0" fill="#0a3296"/>
<line x1="411.9" y1="247.5" x2="411.9" y2="261.9" stroke="#ff0a3a" stroke-width="1.2"/>
<rect x="410.2" y="248.1" width="3.4" height="11.4" fill="#ff0a3a"/>
<line x1="417.9" y1="231.0" x2="417.9" y2="247.5" stroke="#ff0a3a" stroke-width="1.2"/>
<rect x="416.2" y="231.7" width="3.4" height="11.0" fill="#ff0a3a"/>
<line x1="423.9" y1="228.3" x2="423.9" y2="238.5" stroke="#ff0a3a" stroke-width="1.2"/>
<rect x="422.2" y="228.9" width="3.4" height="6.6" fill="#ff0a3a"/>
<line x1="429.8" y1="218.7" x2="429.8" y2="234.3" stroke="#ff0a3a" stroke-width="1.2"/>
<rect x="428.1" y="219.9" width="3.4" height="10.8" fill="#ff0a3a"/>
<line x1="435.8" y1="218.3" x2="435.8" y2="228.5" stroke="#ff0a3a" stroke-width="1.2"/>
<rect x="434.1" y="220.7" width="3.4" height="3.0" fill="#ff0a3a"/>
<line x1="441.8" y1="213.5" x2="441.8" y2="223.7" stroke="#ff0a3a" stroke-width="1.2"/>
<rect x="440.1" y="218.9" width="3.4" height="4.2" fill="#ff0a3a"/>
<line x1="447.8" y1="218.3" x2="447.8" y2="230.9" stroke="#0a3296" stroke-width="1.2"/>
<rect x="446.1" y="223.1" width="3.4" height="7.2" fill="#0a3296"/>
<line x1="453.7" y1="209.3" x2="453.7" y2="228.5" stroke="#ff0a3a" stroke-width="1.2"/>
<rect x="452.0" y="209.9" width="3.4" height="17.4" fill="#ff0a3a"/>
<line x1="459.7" y1="209.3" x2="459.7" y2="219.5" stroke="#0a3296" stroke-width="1.2"/>
<rect x="458.0" y="210.5" width="3.4" height="1.6" fill="#0a3296"/>
<line x1="465.7" y1="208.1" x2="465.7" y2="220.7" stroke="#ff0a3a" stroke-width="1.2"/>
<rect x="464.0" y="208.4" width="3.4" height="6.3" fill="#ff0a3a"/>
<line x1="471.7" y1="196.4" x2="471.7" y2="207.5" stroke="#ff0a3a" stroke-width="1.2"/>
<rect x="470.0" y="197.9" width="3.4" height="3.0" fill="#ff0a3a"/>
<line x1="477.7" y1="199.1" x2="477.7" y2="216.5" stroke="#0a3296" stroke-width="1.2"/>
<rect x="476.0" y="200.3" width="3.4" height="12.6" fill="#0a3296"/>
<line x1="483.6" y1="211.7" x2="483.6" y2="224.3" stroke="#0a3296" stroke-width="1.2"/>
<rect x="481.9" y="212.9" width="3.4" height="10.8" fill="#0a3296"/>
<line x1="489.6" y1="220.1" x2="489.6" y2="237.5" stroke="#0a3296" stroke-width="1.2"/>
<rect x="487.9" y="221.3" width="3.4" height="10.2" fill="#0a3296"/>
<line x1="495.6" y1="224.0" x2="495.6" y2="231.8" stroke="#ff0a3a" stroke-width="1.2"/>
<rect x="493.9" y="225.2" width="3.4" height="6.0" fill="#ff0a3a"/>
<line x1="501.6" y1="227.6" x2="501.6" y2="244.9" stroke="#0a3296" stroke-width="1.2"/>
<rect x="499.9" y="228.2" width="3.4" height="16.1" fill="#0a3296"/>
<line x1="507.5" y1="246.7" x2="507.5" y2="256.3" stroke="#0a3296" stroke-width="1.2"/>
<rect x="505.8" y="250.3" width="3.4" height="2.4" fill="#0a3296"/>
<line x1="513.5" y1="249.1" x2="513.5" y2="259.3" stroke="#ff0a3a" stroke-width="1.2"/>
<rect x="511.8" y="252.1" width="3.4" height="1.8" fill="#ff0a3a"/>
<line x1="519.5" y1="253.3" x2="519.5" y2="260.5" stroke="#0a3296" stroke-width="1.2"/>
<rect x="517.8" y="253.9" width="3.4" height="6.6" fill="#0a3296"/>
<line x1="525.5" y1="262.3" x2="525.5" y2="267.1" stroke="#0a3296" stroke-width="1.2"/>
<rect x="523.8" y="263.5" width="3.4" height="3.6" fill="#0a3296"/>
<line x1="531.4" y1="257.5" x2="531.4" y2="269.5" stroke="#0a3296" stroke-width="1.2"/>
<rect x="529.7" y="261.1" width="3.4" height="7.2" fill="#0a3296"/>
<line x1="537.4" y1="258.7" x2="537.4" y2="267.1" stroke="#ff0a3a" stroke-width="1.2"/>
<rect x="535.7" y="260.5" width="3.4" height="6.0" fill="#ff0a3a"/>
<line x1="543.4" y1="258.7" x2="543.4" y2="270.7" stroke="#0a3296" stroke-width="1.2"/>
<rect x="541.7" y="259.3" width="3.4" height="10.8" fill="#0a3296"/>
<line x1="549.4" y1="262.3" x2="549.4" y2="271.9" stroke="#ff0a3a" stroke-width="1.2"/>
<rect x="547.7" y="263.5" width="3.4" height="7.8" fill="#ff0a3a"/>
<line x1="555.3" y1="256.7" x2="555.3" y2="268.1" stroke="#ff0a3a" stroke-width="1.2"/>
<rect x="553.6" y="257.9" width="3.4" height="8.4" fill="#ff0a3a"/>
<line x1="561.3" y1="250.7" x2="561.3" y2="260.3" stroke="#0a3296" stroke-width="1.2"/>
<rect x="559.6" y="251.9" width="3.4" height="7.8" fill="#0a3296"/>
<line x1="567.3" y1="251.9" x2="567.3" y2="269.3" stroke="#0a3296" stroke-width="1.2"/>
<rect x="565.6" y="255.5" width="3.4" height="13.2" fill="#0a3296"/>
<line x1="573.3" y1="266.3" x2="573.3" y2="274.1" stroke="#0a3296" stroke-width="1.2"/>
<rect x="571.6" y="266.9" width="3.4" height="6.6" fill="#0a3296"/>
<line x1="579.2" y1="268.1" x2="579.2" y2="277.1" stroke="#ff0a3a" stroke-width="1.2"/>
<rect x="577.5" y="268.7" width="3.4" height="7.2" fill="#ff0a3a"/>
<line x1="585.2" y1="271.7" x2="585.2" y2="281.3" stroke="#0a3296" stroke-width="1.2"/>
<rect x="583.5" y="272.9" width="3.4" height="8.4" fill="#0a3296"/>
<line x1="591.2" y1="275.9" x2="591.2" y2="284.6" stroke="#ff0a3a" stroke-width="1.2"/>
<rect x="589.5" y="283.1" width="3.4" height="1.6" fill="#ff0a3a"/>
<line x1="597.2" y1="266.3" x2="597.2" y2="281.3" stroke="#ff0a3a" stroke-width="1.2"/>
<rect x="595.5" y="269.9" width="3.4" height="9.0" fill="#ff0a3a"/>
<line x1="603.1" y1="268.7" x2="603.1" y2="282.5" stroke="#0a3296" stroke-width="1.2"/>
<rect x="601.4" y="274.1" width="3.4" height="7.8" fill="#0a3296"/>
<line x1="609.1" y1="272.9" x2="609.1" y2="283.7" stroke="#ff0a3a" stroke-width="1.2"/>
<rect x="607.4" y="273.5" width="3.4" height="8.4" fill="#ff0a3a"/>
<line x1="615.1" y1="268.7" x2="615.1" y2="276.5" stroke="#ff0a3a" stroke-width="1.2"/>
<rect x="613.4" y="270.5" width="3.4" height="5.4" fill="#ff0a3a"/>
<line x1="621.1" y1="259.8" x2="621.1" y2="278.3" stroke="#ff0a3a" stroke-width="1.2"/>
<rect x="619.4" y="261.0" width="3.4" height="8.3" fill="#ff0a3a"/>
<line x1="627.1" y1="265.1" x2="627.1" y2="280.1" stroke="#0a3296" stroke-width="1.2"/>
<rect x="625.4" y="266.3" width="3.4" height="9.6" fill="#0a3296"/>
<line x1="633.0" y1="272.3" x2="633.0" y2="283.7" stroke="#ff0a3a" stroke-width="1.2"/>
<rect x="631.3" y="277.1" width="3.4" height="1.6" fill="#ff0a3a"/>
<line x1="639.0" y1="279.5" x2="639.0" y2="292.7" stroke="#0a3296" stroke-width="1.2"/>
<rect x="637.3" y="283.1" width="3.4" height="9.0" fill="#0a3296"/>
<line x1="645.0" y1="281.9" x2="645.0" y2="291.5" stroke="#0a3296" stroke-width="1.2"/>
<rect x="643.3" y="283.7" width="3.4" height="1.8" fill="#0a3296"/>
<line x1="651.0" y1="281.9" x2="651.0" y2="293.3" stroke="#0a3296" stroke-width="1.2"/>
<rect x="649.3" y="287.3" width="3.4" height="6.0" fill="#0a3296"/>
<line x1="656.9" y1="289.7" x2="656.9" y2="298.1" stroke="#ff0a3a" stroke-width="1.2"/>
<rect x="655.2" y="290.9" width="3.4" height="5.4" fill="#ff0a3a"/>
<line x1="662.9" y1="278.3" x2="662.9" y2="289.1" stroke="#ff0a3a" stroke-width="1.2"/>
<rect x="661.2" y="280.7" width="3.4" height="7.8" fill="#ff0a3a"/>
<line x1="668.9" y1="280.7" x2="668.9" y2="285.5" stroke="#0a3296" stroke-width="1.2"/>
<rect x="667.2" y="283.1" width="3.4" height="1.8" fill="#0a3296"/>
<line x1="674.9" y1="271.6" x2="674.9" y2="279.9" stroke="#ff0a3a" stroke-width="1.2"/>
<rect x="673.2" y="272.8" width="3.4" height="6.5" fill="#ff0a3a"/>
<line x1="680.8" y1="274.0" x2="680.8" y2="287.7" stroke="#0a3296" stroke-width="1.2"/>
<rect x="679.1" y="276.9" width="3.4" height="10.2" fill="#0a3296"/>
<line x1="686.8" y1="281.7" x2="686.8" y2="290.1" stroke="#0a3296" stroke-width="1.2"/>
<rect x="685.1" y="284.7" width="3.4" height="1.8" fill="#0a3296"/>
<line x1="692.8" y1="284.1" x2="692.8" y2="299.7" stroke="#0a3296" stroke-width="1.2"/>
<rect x="691.1" y="284.7" width="3.4" height="4.8" fill="#0a3296"/>
<line x1="698.8" y1="285.9" x2="698.8" y2="292.5" stroke="#ff0a3a" stroke-width="1.2"/>
<rect x="697.1" y="287.1" width="3.4" height="4.2" fill="#ff0a3a"/>
<line x1="704.7" y1="289.5" x2="704.7" y2="295.5" stroke="#0a3296" stroke-width="1.2"/>
<rect x="703.0" y="290.7" width="3.4" height="3.0" fill="#0a3296"/>
<line x1="710.7" y1="287.1" x2="710.7" y2="294.9" stroke="#ff0a3a" stroke-width="1.2"/>
<rect x="709.0" y="288.3" width="3.4" height="6.0" fill="#ff0a3a"/>
<line x1="716.7" y1="279.3" x2="716.7" y2="292.5" stroke="#ff0a3a" stroke-width="1.2"/>
<rect x="715.0" y="280.5" width="3.4" height="10.8" fill="#ff0a3a"/>
<line x1="722.7" y1="269.2" x2="722.7" y2="276.9" stroke="#ff0a3a" stroke-width="1.2"/>
<rect x="721.0" y="270.4" width="3.4" height="6.5" fill="#ff0a3a"/>
<line x1="728.6" y1="269.7" x2="728.6" y2="277.3" stroke="#0a3296" stroke-width="1.2"/>
<rect x="726.9" y="271.2" width="3.4" height="1.6" fill="#0a3296"/>
<line x1="734.6" y1="268.4" x2="734.6" y2="280.1" stroke="#0a3296" stroke-width="1.2"/>
<rect x="732.9" y="270.6" width="3.4" height="6.1" fill="#0a3296"/>
<line x1="740.6" y1="266.0" x2="740.6" y2="278.5" stroke="#ff0a3a" stroke-width="1.2"/>
<rect x="738.9" y="267.2" width="3.4" height="11.0" fill="#ff0a3a"/>
<line x1="746.6" y1="272.4" x2="746.6" y2="278.5" stroke="#0a3296" stroke-width="1.2"/>
<rect x="744.9" y="273.0" width="3.4" height="3.1" fill="#0a3296"/>
<line x1="752.5" y1="269.7" x2="752.5" y2="278.5" stroke="#0a3296" stroke-width="1.2"/>
<rect x="750.8" y="270.9" width="3.4" height="5.2" fill="#0a3296"/>
<line x1="758.5" y1="271.8" x2="758.5" y2="281.6" stroke="#ff0a3a" stroke-width="1.2"/>
<rect x="756.8" y="272.7" width="3.4" height="8.0" fill="#ff0a3a"/>
<line x1="764.5" y1="273.0" x2="764.5" y2="281.3" stroke="#0a3296" stroke-width="1.2"/>
<rect x="762.8" y="273.9" width="3.4" height="5.9" fill="#0a3296"/>
<text x="89.5" y="85.8" class="lb">12/27</text>
<text x="89.5" y="96.8" class="lb">73.00</text>
<text x="65.0" y="172.7" class="lb">55.47</text>
<text x="65.0" y="183.7" class="lb">12/20</text>
<text x="274.0" y="163.8" class="lb">2/9</text>
<text x="274.0" y="174.8" class="lb">51.23</text>
<text x="221.0" y="243.0" class="lb">36.00</text>
<text x="221.0" y="254.0" class="lb">1/27</text>
<text x="406.0" y="274.0" class="lb">27.30</text>
<text x="406.0" y="285.0" class="lb">3/14</text>
<text x="472.0" y="183.0" class="lb">3/29</text>
<text x="472.0" y="194.0" class="lb">46.00</text>
<text x="556.0" y="244.7" class="lb">4/13</text>
<text x="556.0" y="255.7" class="lb">28.89</text>
<text x="543.0" y="280.7" class="lb">25.54</text>
<text x="543.0" y="291.7" class="lb">4/14</text>
<text x="592.0" y="294.6" class="lb">21.48</text>
<text x="592.0" y="305.6" class="lb">4/27</text>
<text x="621.5" y="246.9" class="lb">5/4</text>
<text x="621.5" y="257.9" class="lb">28.14</text>
<text x="705.0" y="306.5" class="lb">18.44</text>
<text x="705.0" y="317.5" class="lb">5/24</text>
<text x="795.5" y="84.8" class="ax">80</text>
<text x="795.5" y="114.8" class="ax">70</text>
<text x="795.5" y="150.6" class="ax">60</text>
<text x="795.5" y="186.4" class="ax">50</text>
<text x="795.5" y="222.3" class="ax">40</text>
<text x="795.5" y="258.1" class="ax">30</text>
<text x="795.5" y="294.0" class="ax">20</text>
<text x="795.5" y="329.9" class="ax">10</text>
<text x="795.5" y="339.9" class="ax">5</text>
<text x="795.5" y="388.3" class="ax">0</text>
<text x="795.5" y="436.5" class="ax">-5</text>
<text x="795.5" y="484.8" class="ax">-10</text>
<text x="118.8" y="498.8" class="dt">2022/1</text>
<text x="238.8" y="498.8" class="dt">2022/2</text>
<text x="352.2" y="498.8" class="dt">2022/3</text>
<text x="489.6" y="498.8" class="dt">2022/4</text>
<text x="609.6" y="498.8" class="dt">2022/5</text>
<text x="735.1" y="498.8" class="dt">2022/6</text>
<text x="796" y="511.5" class="rf">&#169; Refinitiv</text>
</svg>
<div class="leg" style="top:518px">上段: <span class="g">SMA 5</span> <span class="pu" style="margin-left:5px">SMA 25</span></div>
<div class="leg" style="top:538px">下段: <span class="pu">MACD 12 26</span> <span class="g" style="margin-left:5px">Signal 12 26 9</span></div>
<div id="p2"></div>
<div class="hd" style="left:20px;top:571px">スタイル:</div>
<div class="sel" style="left:20px;top:589px;width:220px;height:22px">ローソク足</div>
<div class="chev" style="left:225px;top:594px"></div>
<div class="hd" style="left:20px;top:610px">比較する指数:</div>
<div class="sel" style="left:20px;top:628px;width:220px;height:22px">なし</div>
<div class="chev" style="left:225px;top:633px"></div>
<div class="hd" style="left:262px;top:571px">テクニカル</div>
<div class="sm" style="left:262px;top:595px">上段:</div>
<div class="sel" style="left:296px;top:589px;width:220px;height:22px">単純移動平均線（2本）</div>
<div class="chev" style="left:501px;top:594px"></div>
<div class="sm" style="left:262px;top:634px">下段:</div>
<div class="sel" style="left:296px;top:628px;width:220px;height:22px">MACD</div>
<div class="chev" style="left:501px;top:633px"></div>
<div class="sm" style="left:526px;top:594px;font-size:12px;letter-spacing:-0.3px">期間:</div>
<div class="inp" style="left:558px;top:590px">5</div>
<div class="inp" style="left:597px;top:590px">25</div>
<div class="inp dis" style="left:637px;top:590px;width:36px"></div>
<div class="sm" style="left:526px;top:633px;font-size:12px;letter-spacing:-0.3px">期間:</div>
<div class="inp dis" style="left:558px;top:628px"></div>
<div class="inp dis" style="left:597px;top:628px"></div>
<div class="inp dis" style="left:637px;top:628px;width:36px"></div>
<div class="abs" style="left:726px;top:591px;width:13px;height:13px;background:#0b6fe6;border-radius:2px"></div>
<svg class="abs" style="left:726px;top:591px" width="13" height="13"><path d="M3 6.8 L5.5 9.3 L10 3.8" fill="none" stroke="#fff" stroke-width="2"/></svg>
<div class="sm" style="left:743px;top:587px;font-size:13px;color:#111">転換点</div>
<div class="abs" style="left:723px;top:624px;width:78px;height:30px;border:1px solid #c8dcf8;background:#e6f0fc"></div>
<div class="abs" style="left:725px;top:626px;width:74px;height:26px;background:linear-gradient(#86c4f2 0%,#7dbff2 45%,#52a6f6 55%,#4fa3f6 100%);color:#fff;font-weight:bold;font-size:14px;line-height:26px;text-align:center">表示</div>
</body></html>
